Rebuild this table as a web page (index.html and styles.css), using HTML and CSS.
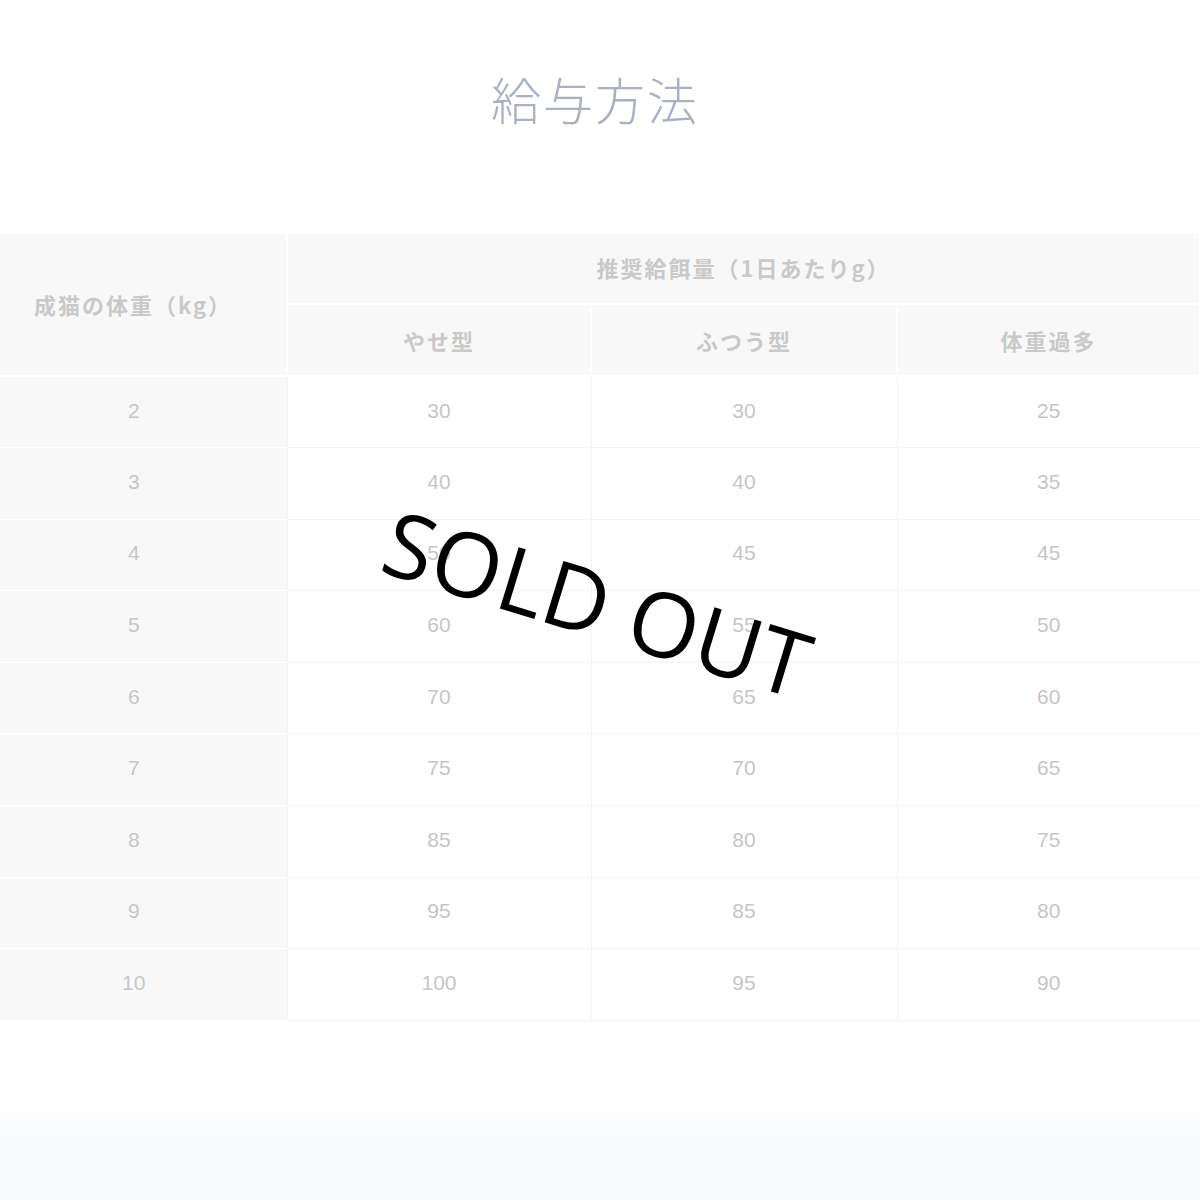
FILE: index.html
```html
<!DOCTYPE html>
<html lang="ja">
<head>
<meta charset="utf-8">
<link rel="stylesheet" href="styles.css">
</head>
<body>
<div class="page">
  <h1 class="title">給与方法</h1>
  <table class="feed">
    <colgroup>
      <col class="c1"><col class="c2"><col class="c3"><col class="c4">
    </colgroup>
    <thead>
      <tr class="h1row">
        <th rowspan="2" class="first">成猫の体重（kg）</th>
        <th colspan="3">推奨給餌量（1日あたりg）</th>
      </tr>
      <tr class="h2row">
        <th>やせ型</th><th>ふつう型</th><th>体重過多</th>
      </tr>
    </thead>
    <tbody>
      <tr><th>2</th><td>30</td><td>30</td><td>25</td></tr>
      <tr><th>3</th><td>40</td><td>40</td><td>35</td></tr>
      <tr><th>4</th><td>50</td><td>45</td><td>45</td></tr>
      <tr><th>5</th><td>60</td><td>55</td><td>50</td></tr>
      <tr><th>6</th><td>70</td><td>65</td><td>60</td></tr>
      <tr><th>7</th><td>75</td><td>70</td><td>65</td></tr>
      <tr><th>8</th><td>85</td><td>80</td><td>75</td></tr>
      <tr><th>9</th><td>95</td><td>85</td><td>80</td></tr>
      <tr><th>10</th><td>100</td><td>95</td><td>90</td></tr>
    </tbody>
  </table>
  <div class="soldout">SOLD OUT</div>
</div>
</body>
</html>
```
FILE: styles.css
```css
html, body {
  margin: 0;
  padding: 0;
}
body {
  width: 1200px;
  height: 1200px;
  overflow: hidden;
  background: linear-gradient(to bottom, #ffffff 0, #ffffff 1095px, #f9fafc 1135px, #f9fafc 1200px);
  font-family: "Noto Sans CJK JP", sans-serif;
}
.page {
  position: relative;
  width: 1200px;
  height: 1200px;
}
.title {
  margin: 0 0 0 -10px;
  padding-top: 70px;
  height: 160px;
  box-sizing: border-box;
  text-align: center;
  font-family: "Noto Sans CJK JP", sans-serif;
  font-weight: 300;
  font-size: 50px;
  line-height: 56px;
  color: #a8b0c2;
  letter-spacing: 2px;
}
.feed {
  margin-top: 72px;
  width: 1200px;
  border-collapse: collapse;
  table-layout: fixed;
}
.c1 { width: 287px; }
.c2 { width: 304px; }
.c3 { width: 306px; }
.c4 { width: 303px; }
.feed th, .feed td {
  text-align: center;
  padding: 0;
}
.feed thead th {
  background: #f8f8f8;
  color: #c9c9c9;
  font-family: "Noto Sans CJK JP", sans-serif;
  font-weight: 700;
  font-size: 22px;
  letter-spacing: 2px;
  border: 2px solid #ffffff;
}
.feed thead th.first {
  border-left: none;
  padding-right: 20px;
  padding-bottom: 2px;
}
.h1row { height: 71px; }
.h1row th { padding-bottom: 4px; }
.h2row { height: 72px; }
.feed tbody tr { height: 71.6px; }
.feed tbody th {
  background: #f8f8f8;
  border-top: 1px solid #ffffff;
  border-bottom: 1px solid #ffffff;
  font-weight: 400;
  padding-right: 19px;
}
.feed tbody th, .feed tbody td {
  font-family: "Liberation Sans Narrow", "Liberation Sans", sans-serif;
  font-size: 21px;
  color: #c6c6c6;
  padding-bottom: 3px;
}
.feed tbody td {
  background: #ffffff;
  border: 1px solid #f3f3f3;
}
.feed tbody td:last-child {
  border-right: none;
}
.soldout {
  position: absolute;
  left: 598px;
  top: 602px;
  transform: translate(-50%, -50%) rotate(17deg);
  font-family: "Open Sans", sans-serif;
  font-size: 90px;
  line-height: 1;
  color: #000000;
  white-space: nowrap;
}
```
